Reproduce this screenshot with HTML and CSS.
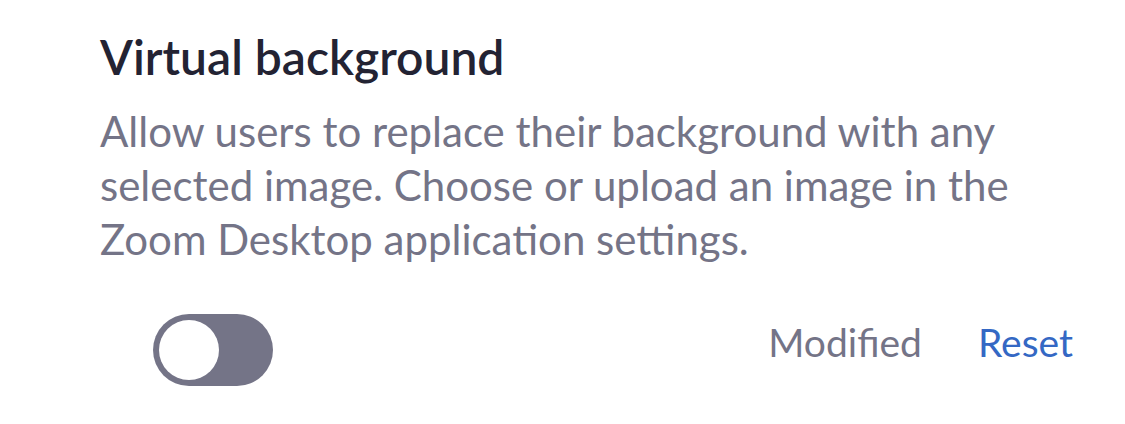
FILE: index.html
```html
<!DOCTYPE html>
<html lang="en">
<head>
<meta charset="utf-8">
<link rel="stylesheet" href="styles.css">
</head>
<body>
<div class="setting">
  <h2 class="title">Virtual background</h2>
  <p class="desc">Allow users to replace their background with any selected image. Choose or upload an image in the Zoom Desktop application settings.</p>
  <div class="row">
    <div class="toggle"><span class="knob"></span></div>
    <div class="status">
      <span class="modified">Modified</span>
      <span class="reset">Reset</span>
    </div>
  </div>
</div>
</body>
</html>
```

FILE: styles.css
```css
html, body {
  margin: 0;
  padding: 0;
  background: #ffffff;
}
body {
  font-family: Lato, "Noto Sans", sans-serif;
  width: 1125px;
  height: 424px;
  overflow: hidden;
}
.setting {
  padding: 30px 51px 0 100px;
}
.title {
  margin: 0;
  font-size: 48px;
  line-height: 54px;
  font-weight: 600;
  color: #232333;
}
.desc {
  margin: 20px 0 0 0;
  font-size: 42px;
  line-height: 54px;
  color: #747487;
}
.row {
  margin-top: 48px;
  display: flex;
  align-items: center;
  justify-content: space-between;
  padding-left: 53px;
}
.toggle {
  width: 120px;
  height: 72px;
  border-radius: 36px;
  background: #747487;
  display: flex;
  align-items: center;
  padding-left: 6px;
  box-sizing: border-box;
}
.knob {
  width: 60px;
  height: 60px;
  border-radius: 50%;
  background: #ffffff;
}
.status {
  display: flex;
  gap: 56px;
  font-size: 39px;
  padding-bottom: 16px;
}
.modified {
  color: #747487;
}
.reset {
  color: #3468c4;
  padding-right: 1px;
}
```
